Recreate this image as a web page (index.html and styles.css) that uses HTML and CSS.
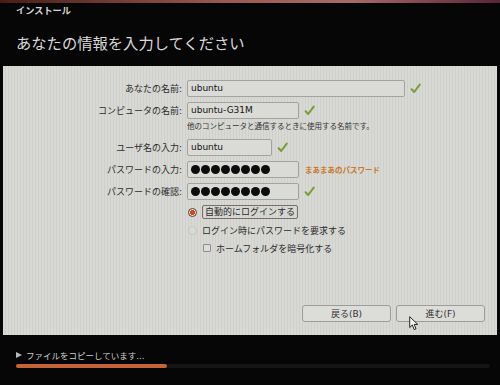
FILE: index.html
```html
<!DOCTYPE html>
<html lang="ja">
<head>
    <meta charset="UTF-8">
    <title>インストール</title>
    <link rel="stylesheet" href="styles.css">
</head>
<body>
    <div class="screen">
        <div class="topline"></div>
        <div class="titlebar">インストール</div>
        <h1 class="heading">あなたの情報を入力してください</h1>

        <div class="panel">
            <div class="form">
                <div class="row">
                    <span class="label">あなたの名前:</span>
                    <div class="field long">ubuntu</div>
                    <svg class="check" viewBox="0 0 12 12"><path d="M1.8 6.8 L4.6 9.8 L10.6 1.8"/></svg>
                </div>
                <div class="row tight">
                    <span class="label">コンピュータの名前:</span>
                    <div class="field mid">ubuntu-G31M</div>
                    <svg class="check" viewBox="0 0 12 12"><path d="M1.8 6.8 L4.6 9.8 L10.6 1.8"/></svg>
                </div>
                <div class="hint">他のコンピュータと通信するときに使用する名前です。</div>
                <div class="row">
                    <span class="label">ユーザ名の入力:</span>
                    <div class="field short">ubuntu</div>
                    <svg class="check" viewBox="0 0 12 12"><path d="M1.8 6.8 L4.6 9.8 L10.6 1.8"/></svg>
                </div>
                <div class="row">
                    <span class="label">パスワードの入力:</span>
                    <div class="field mid dots">
                        <i></i><i></i><i></i><i></i><i></i><i></i><i></i><i></i>
                    </div>
                    <span class="strength">まあまあのパスワード</span>
                </div>
                <div class="row">
                    <span class="label">パスワードの確認:</span>
                    <div class="field mid dots">
                        <i></i><i></i><i></i><i></i><i></i><i></i><i></i><i></i>
                    </div>
                    <svg class="check" viewBox="0 0 12 12"><path d="M1.8 6.8 L4.6 9.8 L10.6 1.8"/></svg>
                </div>

                <div class="options">
                    <div class="opt">
                        <span class="radio on"></span>
                        <span class="focus">自動的にログインする</span>
                    </div>
                    <div class="opt">
                        <span class="radio"></span>
                        <span>ログイン時にパスワードを要求する</span>
                    </div>
                    <div class="opt sub">
                        <span class="checkbox"></span>
                        <span>ホームフォルダを暗号化する</span>
                    </div>
                </div>
            </div>

            <div class="buttons">
                <button class="btn">戻る(B)</button>
                <button class="btn">進む(F)</button>
            </div>
        </div>

        <div class="status">
            <div class="status-text"><span class="arrow"></span>ファイルをコピーしています...</div>
            <div class="track"><div class="bar"></div></div>
        </div>

        <svg class="cursor" viewBox="0 0 10 15">
            <path d="M0.7 0.7 L0.7 11.5 L3.3 9 L5.2 13.6 L7 12.8 L5.2 8.4 L8.8 8.4 Z"/>
        </svg>
    </div>
</body>
</html>
```

FILE: styles.css
```css
body {
    margin: 0;
    background-color: #050505;
    font-family: "DejaVu Sans", "Noto Sans CJK JP", sans-serif;
}
.screen {
    position: relative;
    width: 500px;
    height: 385px;
    overflow: hidden;
    background: #060606;
}
.topline {
    height: 3px;
    background: linear-gradient(90deg, #4a1c18, #9a5a52 45%, #a86a6a 70%, #5a2438);
}
.titlebar {
    height: 16px;
    line-height: 16px;
    padding-left: 16px;
    font-size: 9.2px;
    font-weight: bold;
    color: #d4d4d4;
}
.heading {
    margin: 3px 0 0 0;
    height: 44px;
    line-height: 44px;
    padding-left: 16px;
    font-size: 15.3px;
    font-weight: normal;
    color: #d8d8d8;
}
.panel {
    margin: 0 3px;
    height: 269px;
    box-sizing: border-box;
    padding-top: 14px;
    display: flex;
    flex-direction: column;
    background-color: #d5d5d1;
    background-image: repeating-linear-gradient(90deg, #d8d8d4 0, #d8d8d4 2px, #cfcfcb 2px, #cfcfcb 3px);
}
.row {
    display: flex;
    align-items: center;
    height: 17px;
    margin-bottom: 5px;
}
.row.tight {
    margin-bottom: 2px;
}
.label {
    width: 184px;
    box-sizing: border-box;
    padding-right: 5px;
    text-align: right;
    font-size: 9px;
    color: #2c2c2c;
}
.field {
    height: 17px;
    box-sizing: border-box;
    border: 1px solid #a2a29e;
    border-radius: 2px;
    background: #dadad6;
    padding-left: 3px;
    font-size: 9px;
    line-height: 15px;
    color: #151515;
}
.field.long { width: 218px; }
.field.mid { width: 112px; }
.field.short { width: 85px; }
.dots {
    display: flex;
    align-items: center;
    gap: 1px;
}
.dots i {
    width: 9px;
    height: 9px;
    border-radius: 50%;
    background: #0c0c0c;
}
.check {
    width: 11px;
    height: 11px;
    margin-left: 5px;
    fill: none;
    stroke: #7c9c3a;
    stroke-width: 2.2;
    stroke-linecap: round;
    stroke-linejoin: round;
}
.strength {
    margin-left: 6px;
    font-size: 7.5px;
    font-weight: bold;
    color: #c97a2c;
}
.hint {
    height: 12px;
    line-height: 12px;
    padding-left: 184px;
    margin-bottom: 6px;
    font-size: 7.5px;
    color: #333;
}
.options {
    padding-left: 185px;
}
.opt {
    display: flex;
    align-items: center;
    height: 14px;
    margin-bottom: 4px;
    font-size: 9px;
    color: #2a2a2a;
}
.opt.sub {
    padding-left: 15px;
}
.radio {
    width: 9px;
    height: 9px;
    box-sizing: border-box;
    border-radius: 50%;
    border: 1px solid #c4c4c0;
    background: #d9d9d5;
    margin-right: 5px;
}
.radio.on {
    border: 1px solid #6a3a30;
    background: radial-gradient(circle, #d24a22 0, #d24a22 2.4px, #eee4e0 2.8px);
}
.checkbox {
    width: 8px;
    height: 8px;
    box-sizing: border-box;
    border: 1px solid #8e8e8a;
    border-radius: 1px;
    background: #dcdcd8;
    margin-right: 5px;
}
.focus {
    border: 1px solid #7a6e6c;
    border-radius: 2px;
    padding: 0 2px;
    line-height: 12px;
}
.buttons {
    margin-top: auto;
    display: flex;
    justify-content: flex-end;
    gap: 5px;
    padding: 0 12px 13px 0;
}
.btn {
    width: 89px;
    height: 17px;
    padding: 0;
    border: 1px solid #9c9c98;
    border-radius: 3px;
    background: #dcdcd8;
    font-family: "DejaVu Sans", "Noto Sans CJK JP", sans-serif;
    font-size: 9px;
    color: #333;
}
.status {
    padding-top: 14px;
}
.status-text {
    display: flex;
    align-items: center;
    height: 12px;
    padding-left: 16px;
    font-size: 8.5px;
    color: #cfcfcf;
}
.arrow {
    width: 0;
    height: 0;
    border-top: 3.5px solid transparent;
    border-bottom: 3.5px solid transparent;
    border-left: 6px solid #b8b8b8;
    margin-right: 4px;
}
.track {
    margin: 3px 0 0 16px;
    width: 474px;
    height: 4px;
    border-radius: 2px;
    background: #151515;
}
.bar {
    width: 151px;
    height: 4px;
    border-radius: 2px;
    background: #c4623a;
}
.cursor {
    position: absolute;
    left: 409px;
    top: 316px;
    width: 10px;
    height: 15px;
    fill: #f4f4f4;
    stroke: #111;
    stroke-width: 0.9;
}
```
